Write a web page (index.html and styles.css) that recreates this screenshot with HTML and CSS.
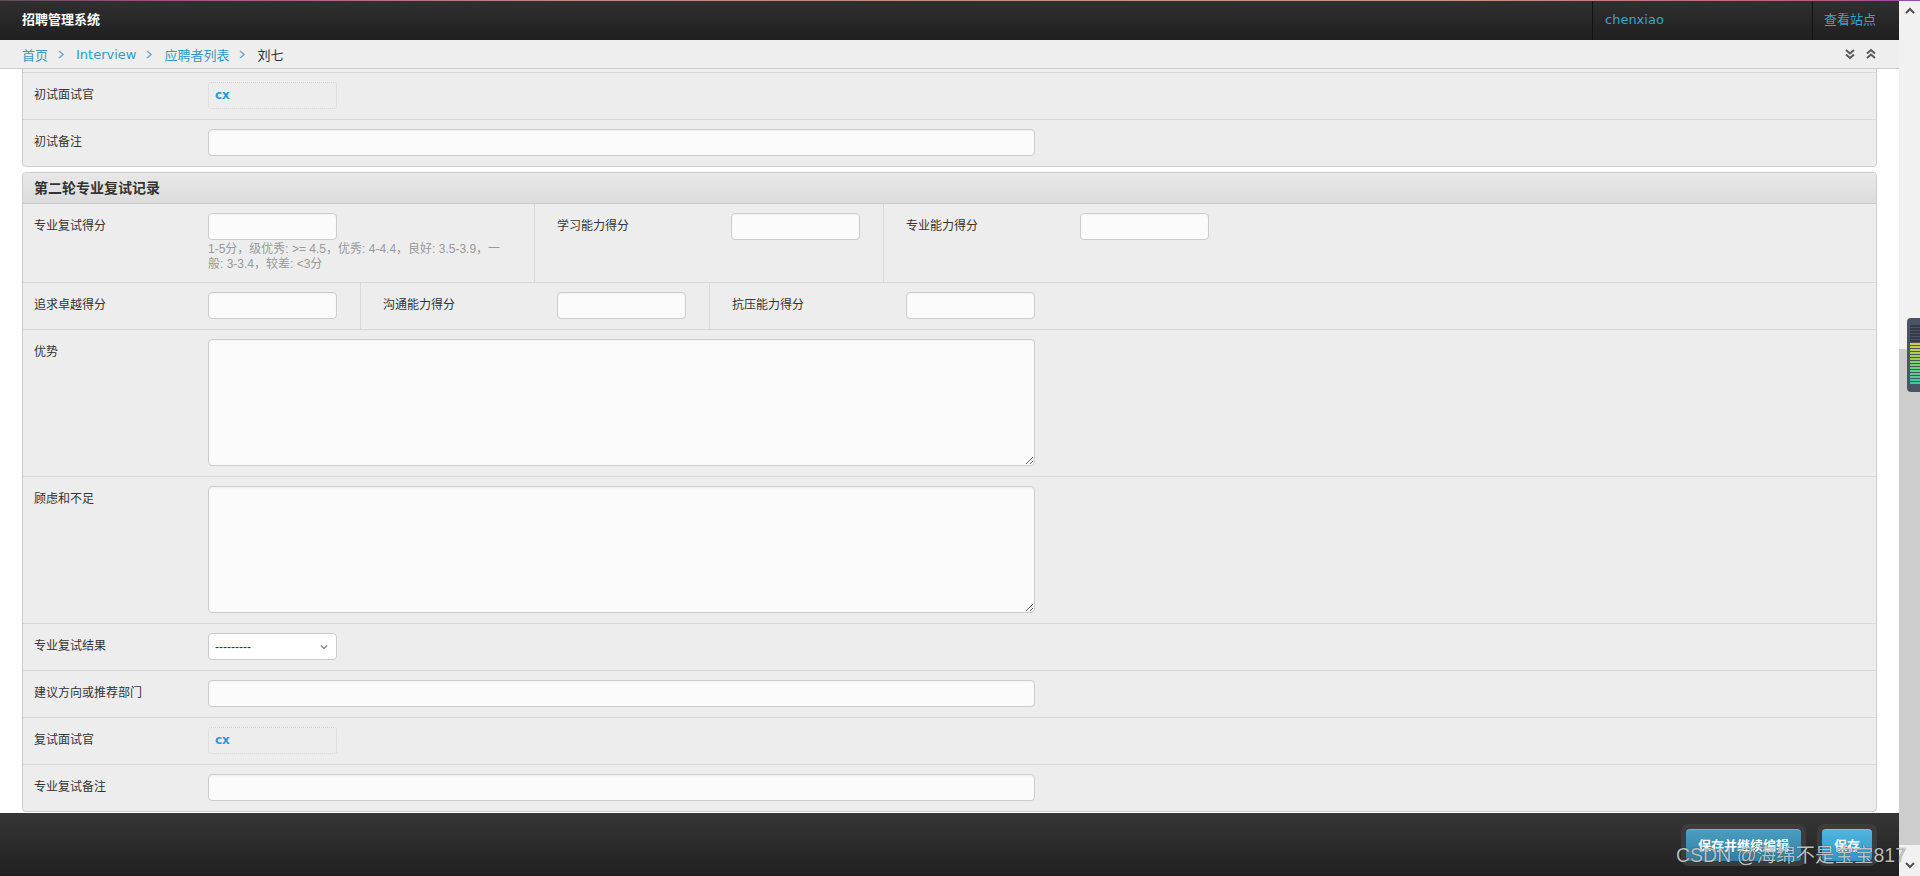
FILE: index.html
```html
<!DOCTYPE html>
<html lang="zh-CN">
<head>
    <meta charset="UTF-8">
    <title>刘七 | 招聘管理系统</title>
    <link rel="stylesheet" href="styles.css">
</head>
<body>
    <div class="topline"></div>
    <div class="page">
        <div class="main">
            <div class="header">
                <div class="brand">招聘管理系统</div>
                <div class="user-cell">chenxiao</div>
                <div class="site-cell"><a href="#">查看站点</a></div>
            </div>

            <div class="breadcrumbs">
                <a href="#">首页</a>
                <svg class="sep" width="6" height="9" viewBox="0 0 6 9"><polyline points="1,1 5,4.5 1,8" /></svg>
                <a href="#">Interview</a>
                <svg class="sep" width="6" height="9" viewBox="0 0 6 9"><polyline points="1,1 5,4.5 1,8" /></svg>
                <a href="#">应聘者列表</a>
                <svg class="sep" width="6" height="9" viewBox="0 0 6 9"><polyline points="1,1 5,4.5 1,8" /></svg>
                <span class="current">刘七</span>
                <div class="crumb-tools">
                    <svg width="12" height="12" viewBox="0 0 12 12"><polyline points="2,2 6,5.5 10,2" /><polyline points="2,6.5 6,10 10,6.5" /></svg>
                    <svg width="12" height="12" viewBox="0 0 12 12"><polyline points="2,5.5 6,2 10,5.5" /><polyline points="2,10 6,6.5 10,10" /></svg>
                </div>
            </div>

            <div class="content">
                <div class="scrolled">
                    <div class="module">
                        <h2>第一轮初试记录</h2>
                        <div class="form-row">
                            <div class="field-box">
                                <label>初试结果</label>
                                <div class="select"><span>---------</span></div>
                            </div>
                        </div>
                        <div class="form-row">
                            <div class="field-box">
                                <label>初试面试官</label>
                                <div class="readonly">cx</div>
                            </div>
                        </div>
                        <div class="form-row">
                            <div class="field-box">
                                <label>初试备注</label>
                                <input class="wide" type="text">
                            </div>
                        </div>
                    </div>

                    <div class="module">
                        <h2>第二轮专业复试记录</h2>
                        <div class="form-row">
                            <div class="field-box">
                                <label>专业复试得分</label>
                                <div>
                                    <input class="short" type="text">
                                    <div class="help">1-5分，级优秀: &gt;= 4.5，优秀: 4-4.4，良好: 3.5-3.9，一般: 3-3.4，较差: &lt;3分</div>
                                </div>
                            </div>
                            <div class="field-box">
                                <label>学习能力得分</label>
                                <input class="short" type="text">
                            </div>
                            <div class="field-box">
                                <label>专业能力得分</label>
                                <input class="short" type="text">
                            </div>
                        </div>
                        <div class="form-row">
                            <div class="field-box">
                                <label>追求卓越得分</label>
                                <input class="short" type="text">
                            </div>
                            <div class="field-box">
                                <label>沟通能力得分</label>
                                <input class="short" type="text">
                            </div>
                            <div class="field-box">
                                <label>抗压能力得分</label>
                                <input class="short" type="text">
                            </div>
                        </div>
                        <div class="form-row">
                            <div class="field-box">
                                <label>优势</label>
                                <textarea></textarea>
                            </div>
                        </div>
                        <div class="form-row">
                            <div class="field-box">
                                <label>顾虑和不足</label>
                                <textarea></textarea>
                            </div>
                        </div>
                        <div class="form-row">
                            <div class="field-box">
                                <label>专业复试结果</label>
                                <div class="select">
                                    <span>---------</span>
                                    <svg width="8" height="6" viewBox="0 0 8 6"><polyline points="1,1.5 4,4.5 7,1.5" /></svg>
                                </div>
                            </div>
                        </div>
                        <div class="form-row">
                            <div class="field-box">
                                <label>建议方向或推荐部门</label>
                                <input class="wide" type="text">
                            </div>
                        </div>
                        <div class="form-row">
                            <div class="field-box">
                                <label>复试面试官</label>
                                <div class="readonly">cx</div>
                            </div>
                        </div>
                        <div class="form-row">
                            <div class="field-box">
                                <label>专业复试备注</label>
                                <input class="wide" type="text">
                            </div>
                        </div>
                    </div>
                </div>
            </div>

            <div class="submit-row">
                <span class="btn-wrap"><button class="btn btn-alt">保存并继续编辑</button></span>
                <span class="btn-wrap"><button class="btn">保存</button></span>
            </div>
        </div>

        <div class="scrollbar">
            <div class="sb-btn"><svg width="10" height="7" viewBox="0 0 10 7"><polyline points="1,6 5,2 9,6" /></svg></div>
            <div class="sb-track"><div class="sb-thumb"></div></div>
            <div class="sb-btn"><svg width="10" height="7" viewBox="0 0 10 7"><polyline points="1,1 5,5 9,1" /></svg></div>
        </div>
    </div>

    <div class="meter"><div class="meter-bars"></div></div>
    <div class="watermark">CSDN @海绵不是宝宝817</div>
</body>
</html>
```

FILE: styles.css
```css
* {
    box-sizing: border-box;
}
html, body {
    margin: 0;
    height: 876px;
    overflow: hidden;
}
body {
    font-family: "Liberation Sans", "Noto Sans CJK SC", sans-serif;
    font-size: 12px;
    color: #333;
    background: #fff;
}
a {
    color: #3a9fcd;
    text-decoration: none;
}

.topline {
    position: absolute;
    top: 0;
    left: 0;
    right: 0;
    height: 1px;
    background: linear-gradient(90deg, #5e4d55 0%, #a3558c 9%, #b98d82 30%, #c29a84 75%, #b5607c 95%, #8d4fb0 100%);
}

.page {
    display: flex;
    height: 876px;
}
.main {
    flex: 1;
    display: flex;
    flex-direction: column;
    min-width: 0;
}

/* header */
.header {
    height: 40px;
    flex-shrink: 0;
    display: flex;
    background: linear-gradient(#303030, #1f1f1f);
    color: #fff;
}
.brand {
    flex: 1;
    padding-left: 22px;
    line-height: 40px;
    font-size: 13px;
    font-weight: bold;
}
.user-cell {
    width: 220px;
    border-left: 1px solid #121212;
    padding-left: 12px;
    line-height: 40px;
    color: #3ea2cf;
    font-family: "DejaVu Sans", sans-serif;
    font-size: 13px;
}
.site-cell {
    width: 87px;
    border-left: 1px solid #121212;
    padding-left: 11px;
    line-height: 40px;
    font-size: 13px;
}
.site-cell a {
    color: #3ea2cf;
}

/* breadcrumbs */
.breadcrumbs {
    height: 29px;
    flex-shrink: 0;
    display: flex;
    align-items: center;
    padding: 0 22px;
    background: #eee;
    border-bottom: 1px solid #ccc;
    font-family: "DejaVu Sans", "Noto Sans CJK SC", sans-serif;
    font-size: 13px;
}
.breadcrumbs a {
    color: #3399c9;
}
.breadcrumbs .sep {
    margin: 0 12px 0 10px;
    fill: none;
    stroke: #7eaac6;
    stroke-width: 1.6;
}
.breadcrumbs .current {
    color: #333;
}
.crumb-tools {
    margin-left: auto;
    display: flex;
    gap: 9px;
}
.crumb-tools svg {
    fill: none;
    stroke: #5a5a5a;
    stroke-width: 2;
}

/* form */
.content {
    flex: 1;
    overflow: hidden;
    padding: 0 22px;
}
.scrolled {
    margin-top: -75px;
}
.module {
    background: #ededed;
    border: 1px solid #ccc;
    border-radius: 4px;
    margin-bottom: 5px;
}
.module h2 {
    margin: 0;
    height: 31px;
    line-height: 30px;
    padding-left: 11px;
    font-size: 14px;
    font-weight: bold;
    color: #333;
    background: linear-gradient(#e8e8e8, #dcdcdc);
    border-bottom: 1px solid #ccc;
    border-radius: 3px 3px 0 0;
}
.form-row {
    display: flex;
    padding: 0 11px;
    border-bottom: 1px solid #d9d9d9;
}
.form-row:last-child {
    border-bottom: 0;
}
.field-box {
    display: flex;
    align-items: flex-start;
    padding: 9px 23px 10px 0;
}
.field-box + .field-box {
    border-left: 1px solid #d9d9d9;
    padding-left: 22px;
}
.field-box label {
    width: 174px;
    flex-shrink: 0;
    line-height: 27px;
    color: #333;
}
input, textarea {
    display: block;
    margin: 0;
    font-family: inherit;
    font-size: 12px;
    background: #fbfbfb;
    border: 1px solid #ccc;
    border-radius: 4px;
    box-shadow: inset 0 1px 2px rgba(0, 0, 0, 0.04);
}
input.short {
    width: 129px;
    height: 27px;
}
input.wide {
    width: 827px;
    height: 27px;
}
textarea {
    width: 827px;
    height: 127px;
}
.help {
    width: 303px;
    margin-top: 2px;
    line-height: 15px;
    color: #999;
    font-size: 12px;
}
.readonly {
    width: 129px;
    height: 27px;
    padding-left: 6px;
    line-height: 25px;
    border: 1px dotted #d2d2d2;
    border-radius: 3px;
    color: #2a9ad6;
    font-family: "DejaVu Sans", sans-serif;
    font-size: 12px;
    font-weight: bold;
}
.select {
    width: 129px;
    height: 27px;
    display: flex;
    align-items: center;
    justify-content: space-between;
    padding: 0 8px 0 6px;
    background: #fff;
    border: 1px solid #ccc;
    border-radius: 4px;
    color: #333;
    font-size: 12px;
}
.select svg {
    fill: none;
    stroke: #888;
    stroke-width: 1.4;
}

/* submit row */
.submit-row {
    height: 63px;
    flex-shrink: 0;
    margin-top: 1px;
    display: flex;
    justify-content: flex-end;
    align-items: center;
    gap: 11px;
    padding-right: 22px;
    background: linear-gradient(#363636, #202020);
}
.btn-wrap {
    display: block;
    padding: 5px;
    background: #3c3c3c;
    border-radius: 7px;
}
.btn {
    display: block;
    height: 32px;
    padding: 0 12px;
    border: 0;
    border-radius: 4px;
    color: #fff;
    font-family: inherit;
    font-size: 13px;
    font-weight: bold;
    background: linear-gradient(#52b6e0, #2f96c8);
    box-shadow: inset 0 1px 0 rgba(255, 255, 255, 0.2);
    cursor: pointer;
}
.btn-alt {
    background: linear-gradient(#4a9ec0, #357f9f);
}

/* scrollbar */
.scrollbar {
    width: 21px;
    flex-shrink: 0;
    display: flex;
    flex-direction: column;
    background: #f1f1f1;
}
.sb-btn {
    height: 21px;
    display: flex;
    align-items: center;
    justify-content: center;
}
.sb-btn svg {
    fill: none;
    stroke: #505050;
    stroke-width: 2;
}
.sb-track {
    flex: 1;
    padding: 328px 0 10px;
}
.sb-thumb {
    height: 100%;
    background: #cdcdcd;
}

/* overlays */
.meter {
    position: absolute;
    top: 318px;
    right: 0;
    width: 13px;
    height: 74px;
    padding: 7px 0 7px 3px;
    background: #4b5463;
    border-radius: 4px 0 0 4px;
}
.meter-bars {
    height: 100%;
    background:
        repeating-linear-gradient(to bottom, transparent 0 2px, #4b5463 2px 3px),
        linear-gradient(#343b47 0 28%, #d9cf43 28%, #a9cf4c 50%, #5fcf83 75%, #36c9b0 100%);
}
.watermark {
    position: absolute;
    top: 839px;
    right: 14px;
    font-size: 19.5px;
    color: rgba(220, 220, 220, 0.85);
    text-shadow: 0 0 1px rgba(0, 0, 0, 0.7);
    white-space: nowrap;
}
```
